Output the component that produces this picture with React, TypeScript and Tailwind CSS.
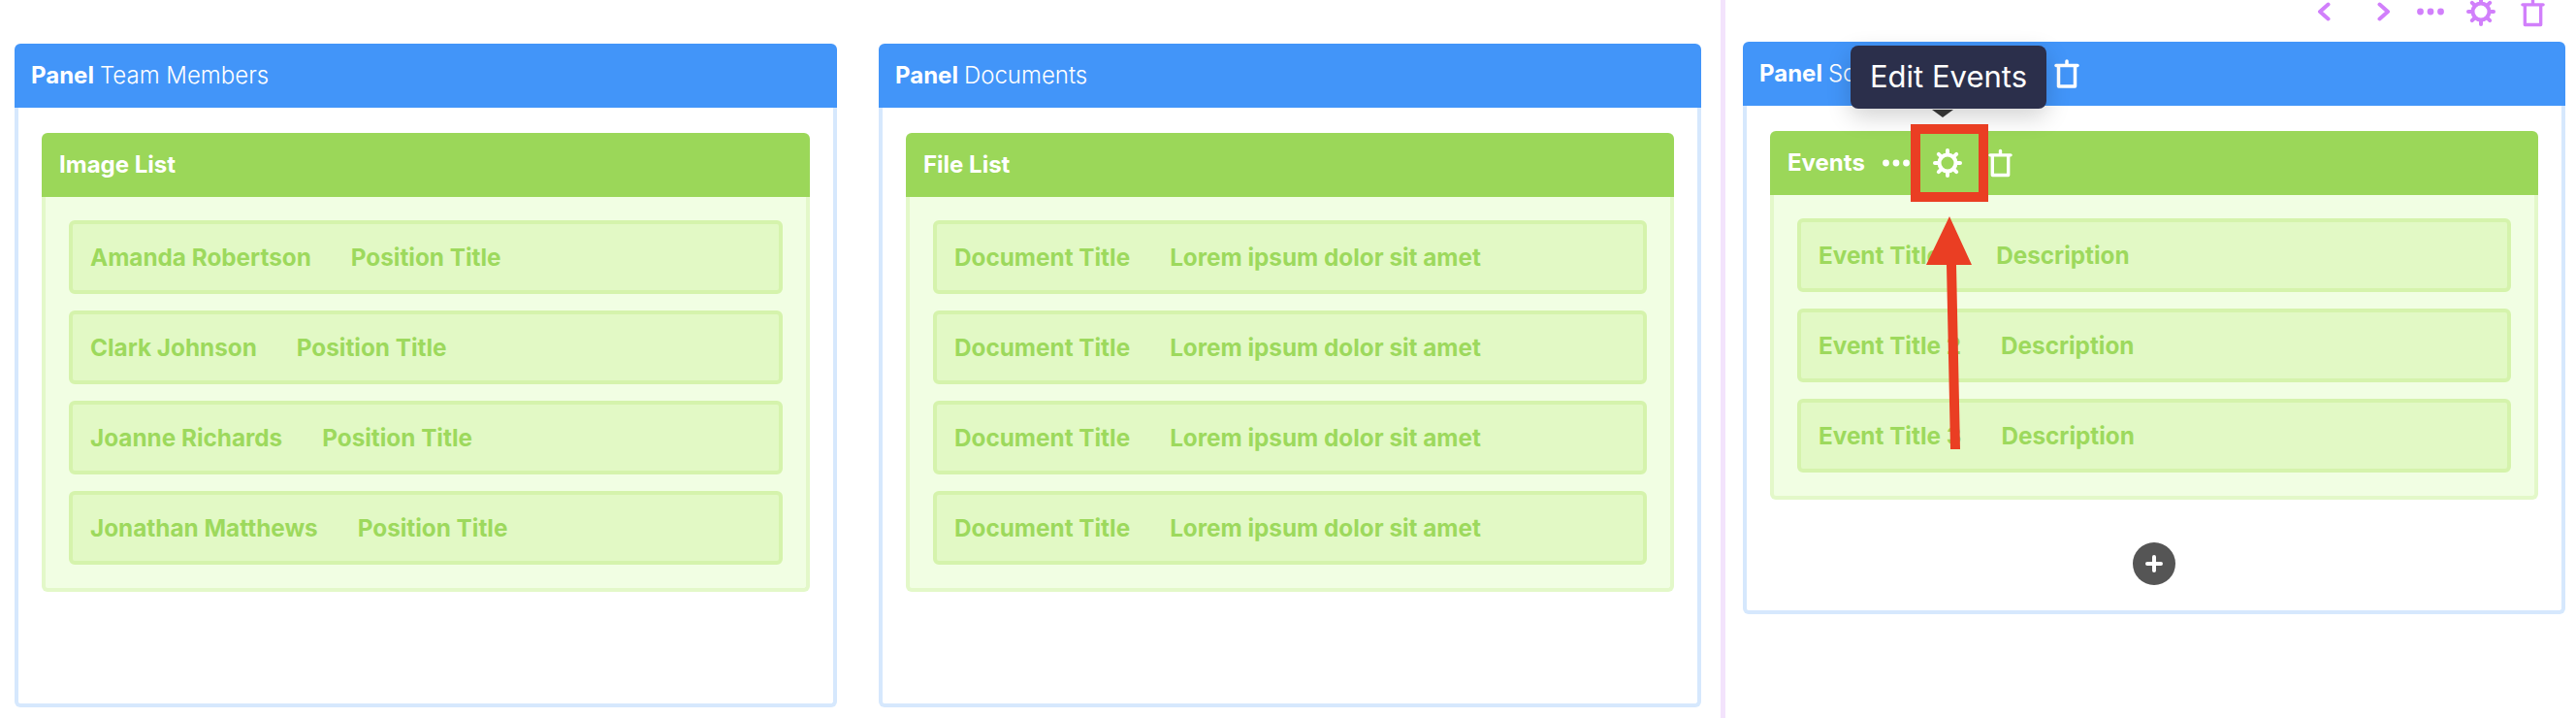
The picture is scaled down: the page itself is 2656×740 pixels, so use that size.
const people = [
  { title: 'Amanda Robertson', detail: 'Position Title' },
  { title: 'Clark Johnson', detail: 'Position Title' },
  { title: 'Joanne Richards', detail: 'Position Title' },
  { title: 'Jonathan Matthews', detail: 'Position Title' },
]

const documents = [
  { title: 'Document Title', detail: 'Lorem ipsum dolor sit amet' },
  { title: 'Document Title', detail: 'Lorem ipsum dolor sit amet' },
  { title: 'Document Title', detail: 'Lorem ipsum dolor sit amet' },
  { title: 'Document Title', detail: 'Lorem ipsum dolor sit amet' },
]

const events = [
  { title: 'Event Title 1', detail: 'Description' },
  { title: 'Event Title 2', detail: 'Description' },
  { title: 'Event Title 3', detail: 'Description' },
]

const spokes = [0, 45, 90, 135, 180, 225, 270, 315]

function GearIcon({ className }: { className: string }) {
  return (
    <svg viewBox="0 0 30 30" fill="none" stroke="currentColor" className={className}>
      <circle cx="15" cy="15" r="8.5" strokeWidth="4" />
      {spokes.map((deg) => (
        <line
          key={deg}
          x1="15"
          y1="5"
          x2="15"
          y2="2"
          strokeWidth="4"
          strokeLinecap="round"
          transform={`rotate(${deg} 15 15)`}
        />
      ))}
    </svg>
  )
}

function TrashIcon({ className }: { className: string }) {
  return (
    <svg viewBox="0 0 26 30" fill="none" stroke="currentColor" strokeWidth="3.5" className={className}>
      <path d="M2 6.5h22" strokeLinecap="round" />
      <path d="M13 6V2" strokeLinecap="round" />
      <path d="M4.5 7v21h17V7" strokeLinejoin="round" />
    </svg>
  )
}

function DotsIcon({ className }: { className: string }) {
  return (
    <svg viewBox="0 0 28 8" fill="currentColor" className={className}>
      <circle cx="3.500" cy="4" r="3.400" />
      <circle cx="14" cy="4" r="3.400" />
      <circle cx="24.500" cy="4" r="3.400" />
    </svg>
  )
}

function ListItem({ title, detail }: { title: string; detail: string }) {
  return (
    <div className="flex h-[76px] items-center gap-[41px] rounded-md border-4 border-[#d5f3ac] bg-[#e2f9c5] px-[18px] text-[24.3px] font-bold text-[#9dd95d]">
      <span>{title}</span>
      <span>{detail}</span>
    </div>
  )
}

function ListBlock({
  heading,
  items,
  actions,
}: {
  heading: string
  items: { title: string; detail: string }[]
  actions?: boolean
}) {
  return (
    <div className="rounded-md">
      <div className="flex h-[66px] items-center rounded-t-md bg-[#9bd759] px-[18px] text-[24px] font-bold text-white">
        <span>{heading}</span>
        {actions && (
          <>
            <DotsIcon className="ml-[18px] h-[8px] w-[28px]" />
            <GearIcon className="ml-[24px] h-[30px] w-[30px]" />
            <TrashIcon className="ml-[27px] h-[30px] w-[25px]" />
          </>
        )}
      </div>
      <div className="flex flex-col gap-[17px] rounded-b-md border-4 border-t-0 border-[#e3f8c9] bg-[#f1fee3] px-[24px] pb-[24px] pt-[24px]">
        {items.map((item, i) => (
          <ListItem key={i} {...item} />
        ))}
      </div>
    </div>
  )
}

export default function App() {
  return (
    <div className="flex h-[740px] w-[2656px] overflow-hidden bg-white font-['Inter',sans-serif]">
      <div className="flex gap-[43px] pl-[15px] pt-[45px]">
        <section className="w-[848px]">
          <div className="flex h-[66px] items-center gap-[6px] rounded-t-md bg-[#4295f9] px-[17px] text-[24px] text-white">
            <b className="font-bold">Panel</b>
            <span className="font-light">Team Members</span>
          </div>
          <div className="h-[618px] rounded-b-md border-4 border-t-0 border-[#d6e8fd] px-[24px] pt-[26px]">
            <ListBlock heading="Image List" items={people} />
          </div>
        </section>

        <section className="w-[848px]">
          <div className="flex h-[66px] items-center gap-[6px] rounded-t-md bg-[#4295f9] px-[17px] text-[24px] text-white">
            <b className="font-bold">Panel</b>
            <span className="font-light">Documents</span>
          </div>
          <div className="h-[618px] rounded-b-md border-4 border-t-0 border-[#d6e8fd] px-[24px] pt-[26px]">
            <ListBlock heading="File List" items={documents} />
          </div>
        </section>
      </div>

      <div className="ml-[20px] h-full w-[5px] bg-[#f3e3fc]" />

      <div className="relative ml-[18px] w-[848px]">
        <div className="flex h-[43px] items-start text-[#d17ffb]">
          <svg viewBox="0 0 14 20" fill="none" stroke="currentColor" strokeWidth="4" strokeLinecap="round" strokeLinejoin="round" className="ml-[592px] mt-[2px] h-[20px] w-[14px]">
            <path d="M11.5 2.5 3 10l8.5 7.500" />
          </svg>
          <svg viewBox="0 0 14 20" fill="none" stroke="currentColor" strokeWidth="4" strokeLinecap="round" strokeLinejoin="round" className="ml-[48px] mt-[2px] h-[20px] w-[14px]">
            <path d="M2.500 2.500 11 10l-8.500 7.500" />
          </svg>
          <DotsIcon className="ml-[26px] mt-[8px] h-[8px] w-[30px]" />
          <GearIcon className="ml-[22px] mt-[-3px] h-[30px] w-[30px]" />
          <TrashIcon className="ml-[26px] mt-[-2px] h-[30px] w-[25px]" />
        </div>

        <section>
          <div className="flex h-[66px] items-center rounded-t-md bg-[#4295f9] px-[17px] text-[24px] text-white">
            <b className="font-bold">Panel</b>
            <span className="ml-[6px] font-light">Schedule</span>
            <TrashIcon className="ml-auto mr-[484px] h-[32px] w-[26px]" />
          </div>
          <div className="flex h-[524px] flex-col items-stretch rounded-b-md border-4 border-t-0 border-[#d6e8fd] px-[24px] pt-[26px]">
            <ListBlock heading="Events" items={events} actions />
            <button className="mx-auto mt-[44px] flex h-[44px] w-[44px] items-center justify-center rounded-full bg-[#555555] text-white">
              <svg viewBox="0 0 18 18" fill="none" stroke="currentColor" strokeWidth="4" strokeLinecap="round" className="h-[18px] w-[18px]">
                <path d="M9 2v14M2 9h14" />
              </svg>
            </button>
          </div>
        </section>

        {/* tooltip over the gear */}
        <div className="absolute left-[111px] top-[47px] flex h-[65px] w-[202px] items-center justify-center rounded-lg bg-[#2b2f4b] text-[31px] text-white shadow-[0_8px_24px_rgba(0,0,0,0.18)]">
          Edit Events
        </div>
        <div className="absolute left-[195px] top-[113px] h-0 w-0 border-x-[11px] border-t-[8px] border-x-transparent border-t-[#333333]" />

        {/* annotation: red box and arrow */}
        <div className="absolute left-[173px] top-[128px] h-[80px] w-[80px] border-[10px] border-[#ea3e23]" />
        <svg viewBox="0 0 60 250" fill="#ea3e23" className="absolute left-[188px] top-[220px] h-[250px] w-[60px]">
          <path d="M25 3 L48 53 L32 53 L36 243 L26 243 L22 53 L1 53 Z" />
        </svg>
      </div>
    </div>
  )
}
